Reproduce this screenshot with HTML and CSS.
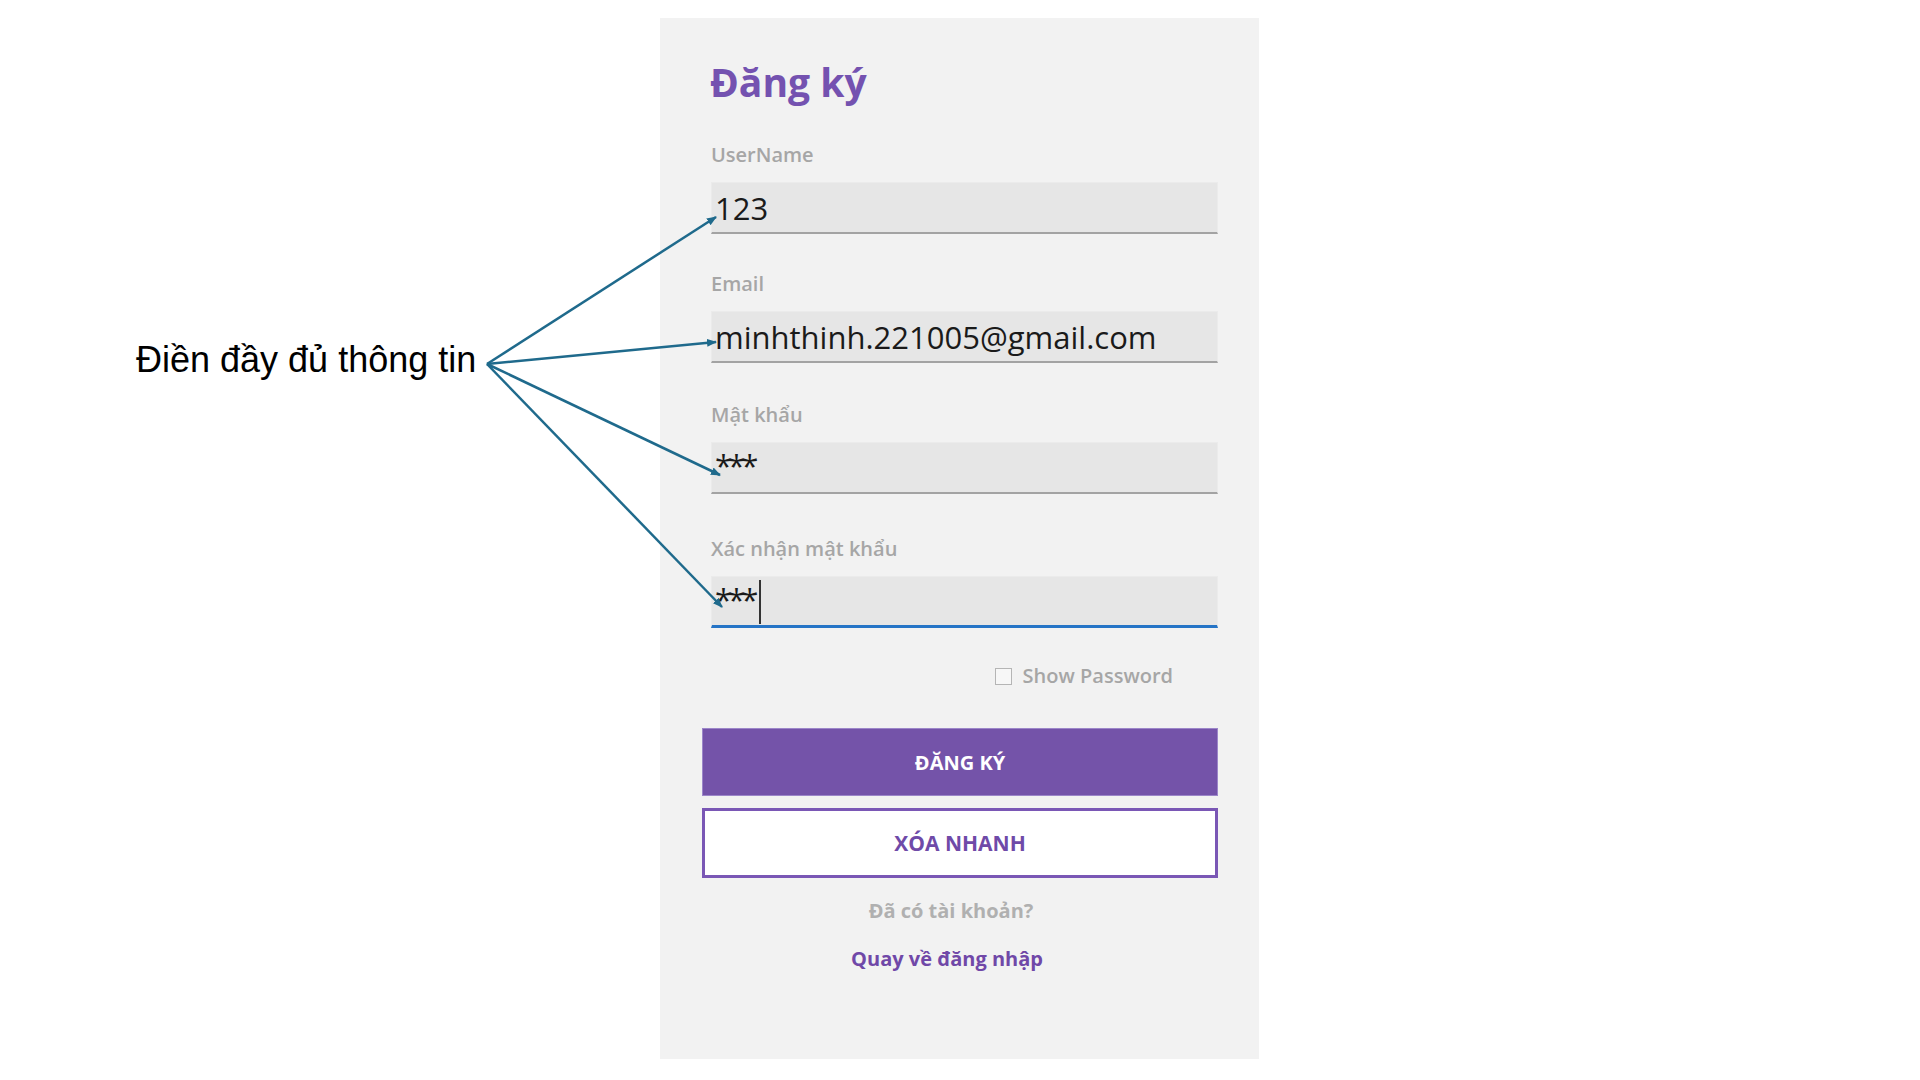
FILE: index.html
```html
<!DOCTYPE html>
<html lang="vi">
<head>
<meta charset="utf-8">
<title>Đăng ký</title>
<link rel="stylesheet" href="styles.css">
</head>
<body>
<div class="page">
  <p class="note">Điền đầy đủ thông tin</p>
  <svg class="arrows" width="1920" height="1080" viewBox="0 0 1920 1080">
    <defs>
      <marker id="head" markerWidth="10" markerHeight="8" refX="9" refY="4" orient="auto" markerUnits="userSpaceOnUse">
        <path d="M0 0 L10 4 L0 8 Z" fill="#1f6a8c"/>
      </marker>
    </defs>
    <g stroke="#1f6a8c" stroke-width="2.5" fill="none" marker-end="url(#head)">
      <line x1="487" y1="364" x2="716" y2="217"/>
      <line x1="487" y1="364" x2="716" y2="342"/>
      <line x1="487" y1="364" x2="720" y2="475"/>
      <line x1="487" y1="364" x2="722" y2="607"/>
    </g>
  </svg>
  <main class="panel">
    <h1 class="title">Đăng ký</h1>
    <div class="fields">
      <div class="field">
        <div class="label">UserName</div>
        <div class="input">123</div>
      </div>
      <div class="field">
        <div class="label">Email</div>
        <div class="input">minhthinh.221005@gmail.com</div>
      </div>
      <div class="field">
        <div class="label">Mật khẩu</div>
        <div class="input"><span class="mask">***</span></div>
      </div>
      <div class="field">
        <div class="label">Xác nhận mật khẩu</div>
        <div class="input focused"><span class="mask">***</span><span class="caret"></span></div>
      </div>
    </div>
    <label class="show">
      <span class="box"></span>
      <span class="show-text">Show Password</span>
    </label>
    <button class="btn primary">ĐĂNG KÝ</button>
    <button class="btn outline">XÓA NHANH</button>
    <div class="footer">
      <div class="muted">Đã có tài khoản?</div>
      <a class="link">Quay về đăng nhập</a>
    </div>
  </main>
</div>
</body>
</html>
```

FILE: styles.css
```css
html, body {
  margin: 0;
  padding: 0;
  background: #ffffff;
}

.page {
  position: relative;
  width: 1920px;
  height: 1080px;
  box-sizing: border-box;
  padding: 18px 0 0 660px;
  font-family: "Open Sans", "Noto Sans", sans-serif;
}

.note {
  position: absolute;
  left: 136px;
  top: 340px;
  margin: 0;
  font-family: "Liberation Sans", Arial, sans-serif;
  font-size: 36px;
  line-height: 40px;
  color: #000;
  white-space: nowrap;
}

.arrows {
  position: absolute;
  left: 0;
  top: 0;
  pointer-events: none;
  z-index: 2;
}

.panel {
  width: 599px;
  height: 1041px;
  box-sizing: border-box;
  background: #f2f2f2;
  padding: 41px 41px 0 42px;
  display: flex;
  flex-direction: column;
}

.title {
  margin: 0 0 38px 8px;
  font-size: 39px;
  line-height: 46px;
  font-weight: 700;
  color: #7452b0;
}

.fields {
  display: flex;
  flex-direction: column;
  gap: 40px;
  margin-left: 9px;
}

.field:nth-child(2) {
  margin-top: -2px;
}

.field:nth-child(4) {
  margin-top: 3px;
}

.label {
  font-size: 20px;
  line-height: 24px;
  font-weight: 600;
  color: #a6a6a6;
  margin-bottom: 15px;
}

.input {
  height: 52px;
  box-sizing: border-box;
  background: #e6e6e6;
  border: 1px solid #ebebeb;
  border-bottom: 2px solid #a3a3a3;
  padding: 2px 0 0 3px;
  font-size: 31px;
  line-height: 46px;
  color: #1a1a1a;
  white-space: nowrap;
  display: flex;
  align-items: flex-start;
}

.mask {
  letter-spacing: -4px;
  margin-top: -3px;
}

.input.focused {
  border-bottom: 3px solid #2574c6;
}

.caret {
  display: inline-block;
  width: 2px;
  height: 44px;
  background: #333;
  margin: 1px 0 0 5px;
}

.show {
  display: flex;
  align-items: center;
  justify-content: flex-end;
  gap: 11px;
  margin: 36px 45px 0 0;
  height: 24px;
}

.box {
  width: 15px;
  height: 15px;
  border: 1px solid #b5b5b5;
  background: #f7f7f7;
}

.show-text {
  font-size: 20px;
  line-height: 24px;
  font-weight: 600;
  color: #a6a6a6;
}

.btn {
  display: flex;
  align-items: center;
  justify-content: center;
  width: 100%;
  box-sizing: border-box;
  font-family: "Open Sans", "Noto Sans", sans-serif;
  font-size: 20px;
  font-weight: 700;
  padding: 0;
  cursor: pointer;
}

.primary {
  margin-top: 40px;
  height: 68px;
  background: #7453a9;
  border: 1px solid #9c86c9;
  color: #ffffff;
}

.outline {
  margin-top: 12px;
  height: 70px;
  background: #ffffff;
  border: 3px solid #7a57b5;
  color: #6f4aa8;
  font-size: 21px;
}

.footer {
  display: flex;
  flex-direction: column;
  align-items: center;
  padding-right: 18px;
  margin-top: 21px;
  gap: 24px;
}

.muted {
  font-size: 20px;
  line-height: 24px;
  font-weight: 700;
  color: #b0b0b0;
}

.link {
  font-size: 20px;
  line-height: 24px;
  font-weight: 700;
  color: #7048a8;
  text-decoration: none;
  margin-right: 8px;
}
```
